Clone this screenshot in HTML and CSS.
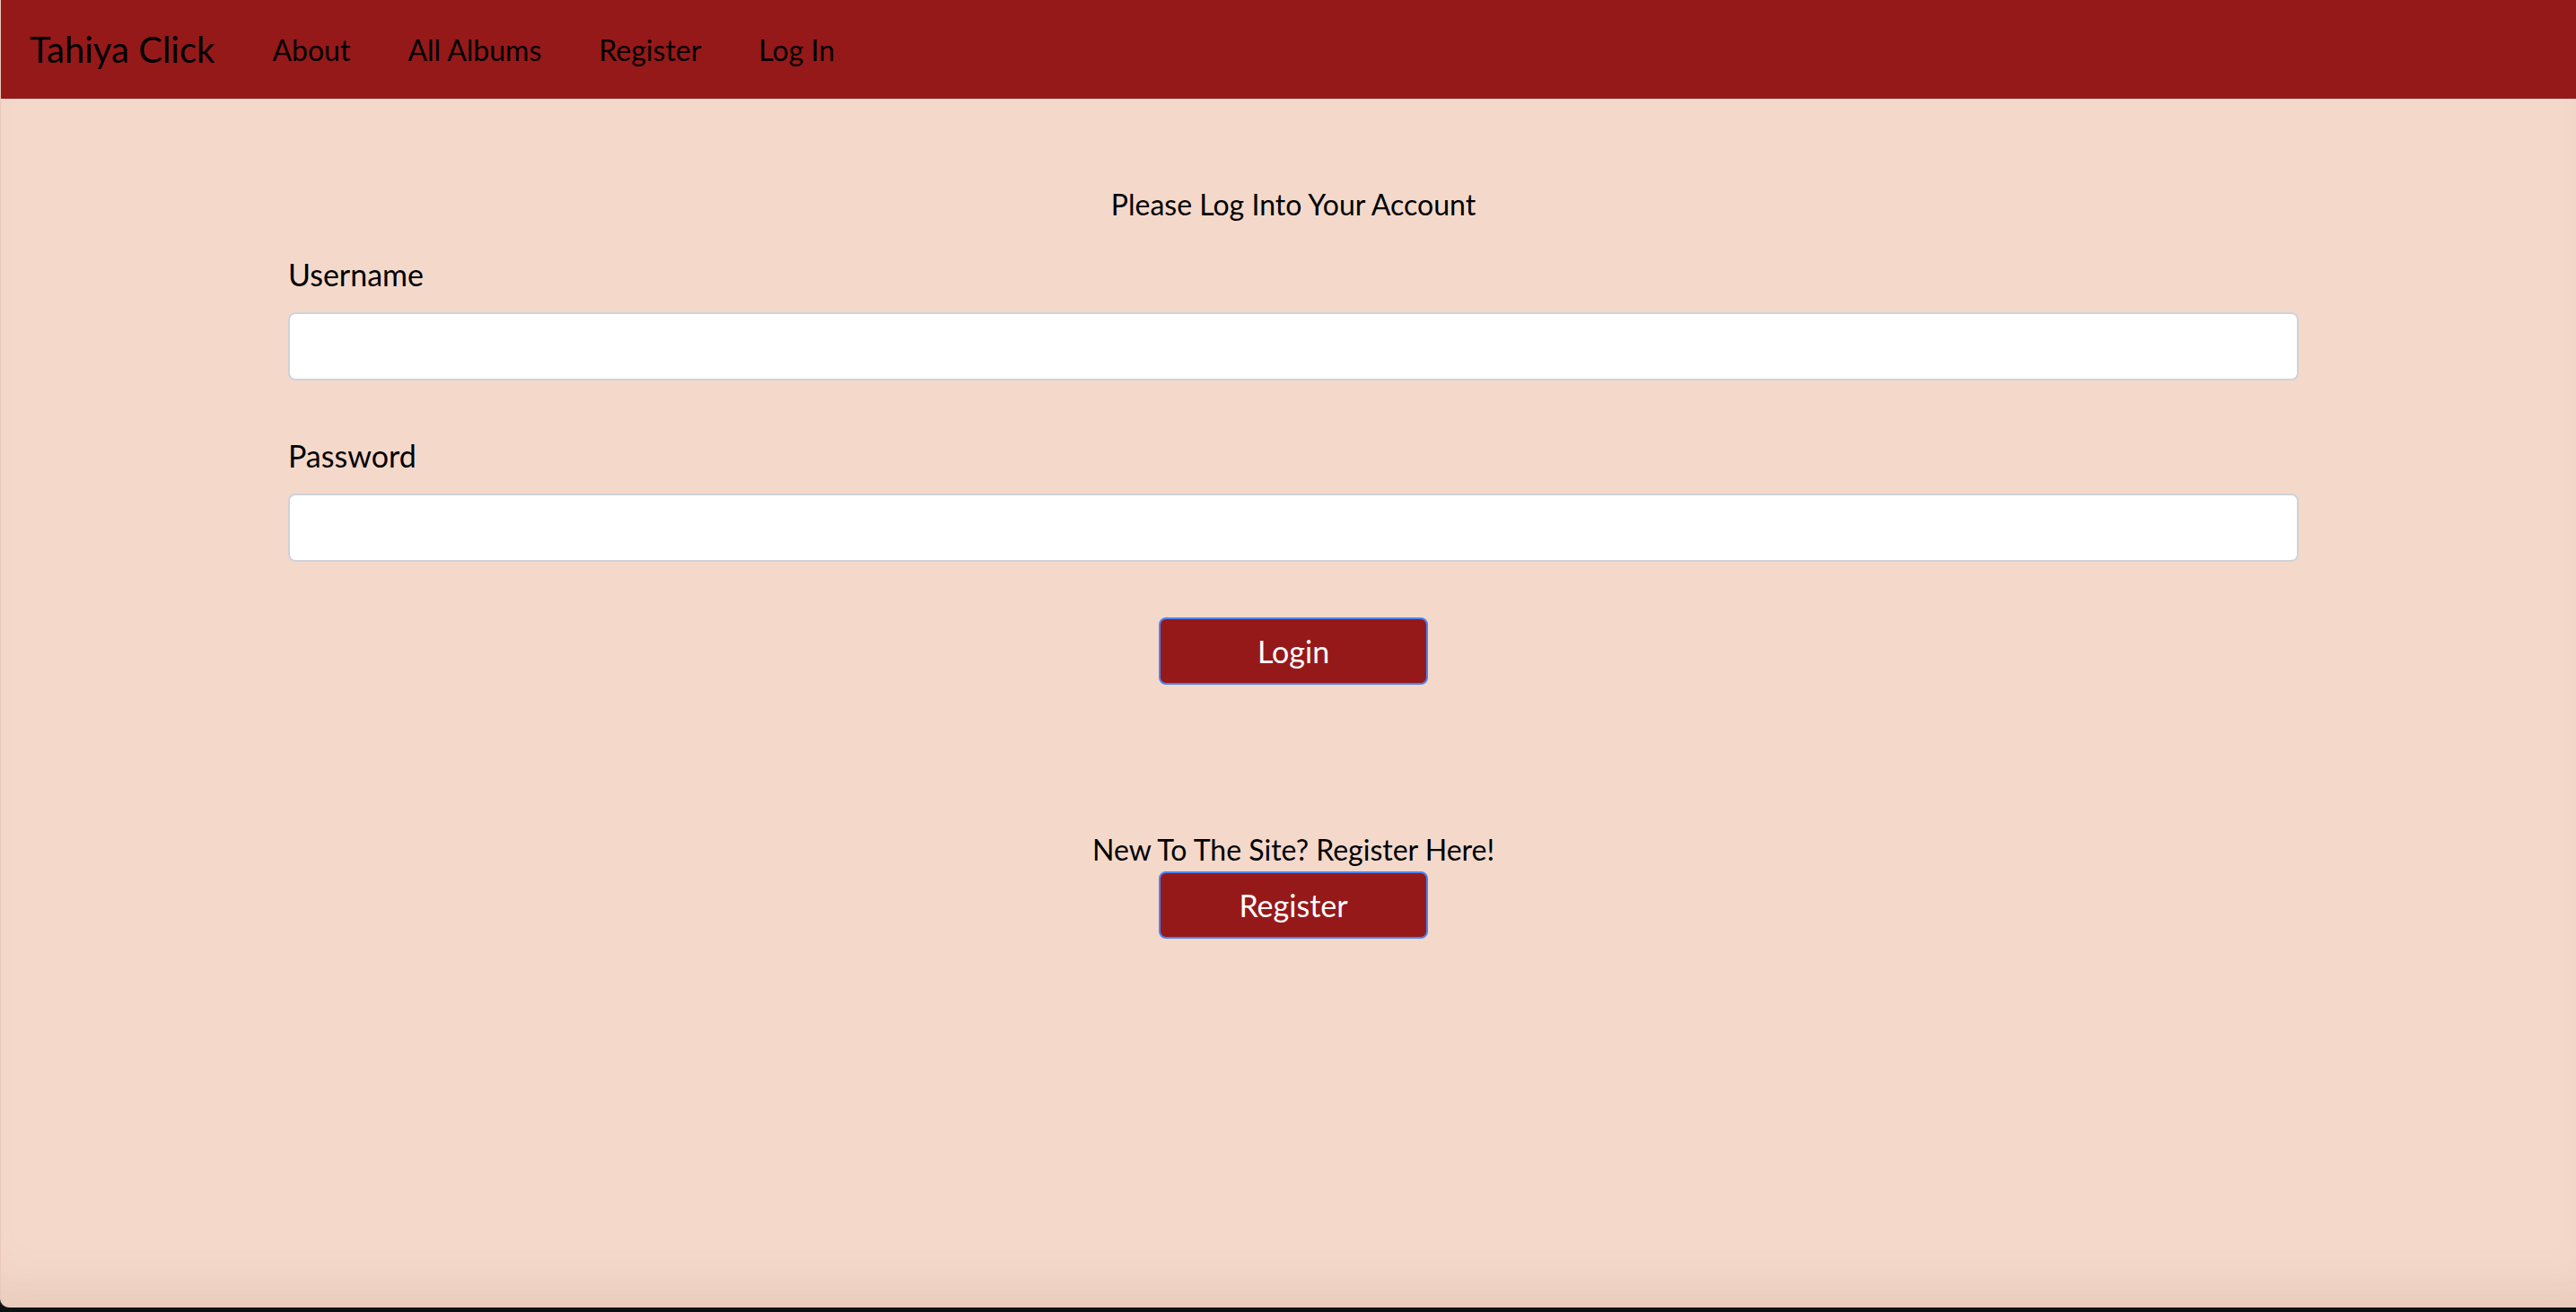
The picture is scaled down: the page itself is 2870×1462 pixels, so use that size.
FILE: index.html
```html
<!DOCTYPE html>
<html lang="en">
<head>
<meta charset="utf-8">
<title>Tahiya Click - Log In</title>
<link rel="stylesheet" href="styles.css">
</head>
<body>
<div class="window">
  <nav class="navbar">
    <a class="brand" href="#">Tahiya Click</a>
    <ul class="nav-links">
      <li><a href="#">About</a></li>
      <li><a href="#">All Albums</a></li>
      <li><a href="#">Register</a></li>
      <li><a href="#">Log In</a></li>
    </ul>
  </nav>
  <main class="container">
    <form class="login-form">
      <p class="form-title">Please Log Into Your Account</p>
      <div class="field">
        <label for="username">Username</label>
        <input id="username" type="text">
      </div>
      <div class="field">
        <label for="password">Password</label>
        <input id="password" type="password">
      </div>
      <div class="actions">
        <button type="button" class="btn">Login</button>
      </div>
    </form>
    <div class="register">
      <p class="register-text">New To The Site? Register Here!</p>
      <button type="button" class="btn">Register</button>
    </div>
  </main>
</div>
</body>
</html>
```
FILE: styles.css
```css
html, body {
  margin: 0;
  padding: 0;
}
body {
  background: #0e1112;
  font-family: "Lato", "Open Sans", sans-serif;
  color: #000;
  overflow: hidden;
}
.window {
  height: 1457px;
  background: #f4d9cb;
  border-bottom-left-radius: 10px;
  box-shadow: inset 0 -50px 50px -30px rgba(150, 90, 60, 0.12);
  display: flex;
  flex-direction: column;
  border-left: 1px solid #e9c9bb;
}
.navbar {
  height: 110px;
  background: #961919;
  display: flex;
  align-items: center;
  padding: 0 0 0 32px;
  flex-shrink: 0;
}
.brand {
  font-size: 40px;
  color: #000;
  text-decoration: none;
  margin-right: 32px;
}
.nav-links {
  list-style: none;
  margin: 0;
  padding: 0;
  display: flex;
}
.nav-links a {
  display: block;
  font-size: 32px;
  padding: 0 32px;
  color: #000;
  text-decoration: none;
}
.container {
  width: 2240px;
  margin-left: 320px;
}
.form-title {
  text-align: center;
  font-size: 32px;
  margin: 94px 0 0;
  line-height: 48px;
}
.field {
  margin-top: 30px;
}
.field + .field {
  margin-top: 60px;
}
label {
  display: block;
  font-size: 34px;
  line-height: 48px;
  margin-bottom: 18px;
}
input {
  display: block;
  box-sizing: border-box;
  width: 100%;
  height: 76px;
  border: 2px solid #cfd2d8;
  border-radius: 8px;
  background: #fff;
  font-size: 32px;
  padding: 0 24px;
  font-family: inherit;
}
.actions {
  display: flex;
  justify-content: center;
  margin-top: 62px;
}
.btn {
  box-sizing: border-box;
  width: 300px;
  height: 75px;
  background: #961919;
  color: #fff;
  border: 2px solid #4d84f5;
  border-radius: 8px;
  font-family: inherit;
  font-size: 34px;
  cursor: pointer;
}
.register {
  margin-top: 160px;
  display: flex;
  flex-direction: column;
  align-items: center;
}
.register-text {
  font-size: 32px;
  line-height: 48px;
  margin: 0;
}
```
